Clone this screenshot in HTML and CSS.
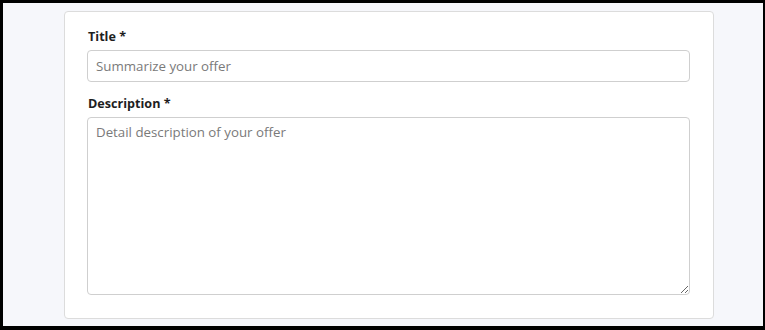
FILE: index.html
```html
<!DOCTYPE html>
<html>
<head>
<meta charset="utf-8">
<link rel="stylesheet" href="styles.css">
</head>
<body>
<div class="frame">
  <div class="card">
    <div class="field">
      <label class="label" for="title">Title *</label>
      <input class="input" id="title" type="text" placeholder="Summarize your offer">
    </div>
    <div class="field">
      <label class="label" for="desc">Description *</label>
      <textarea class="textarea" id="desc" placeholder="Detail description of your offer"></textarea>
    </div>
  </div>
</div>
</body>
</html>
```
FILE: styles.css
```css
html, body {
  margin: 0;
  padding: 0;
  background: #000;
}
body {
  width: 765px;
  height: 330px;
  overflow: hidden;
  font-family: "Open Sans", "Liberation Sans", sans-serif;
}
.frame {
  box-sizing: border-box;
  width: 765px;
  height: 330px;
  border-style: solid;
  border-color: #000;
  border-width: 3px 2px 4px 3px;
  background: #f6f7fb;
  padding: 8px 0 0 61px;
}
.card {
  box-sizing: border-box;
  width: 650px;
  height: 308px;
  background: #fff;
  border: 1px solid #dcdcdc;
  border-radius: 4px;
  padding: 15px 23px 0 22px;
  display: flex;
  flex-direction: column;
  gap: 12px;
}
.field {
  display: flex;
  flex-direction: column;
  gap: 4px;
}
.label {
  font-size: 12.6px;
  font-weight: 700;
  color: #1e1e1e;
  line-height: 19px;
  padding-left: 1px;
}
.input, .textarea {
  box-sizing: border-box;
  width: 603px;
  border: 1px solid #cfcfcf;
  border-radius: 4px;
  font-family: inherit;
  font-size: 13.3px;
  color: #333;
  padding: 0 8px;
  margin: 0;
  outline: none;
  background: #fff;
}
.input {
  height: 32px;
}
.textarea {
  height: 178px;
  padding-top: 5px;
  resize: vertical;
  display: block;
}
.input::placeholder, .textarea::placeholder {
  color: #7a7a7a;
  opacity: 1;
}
```
